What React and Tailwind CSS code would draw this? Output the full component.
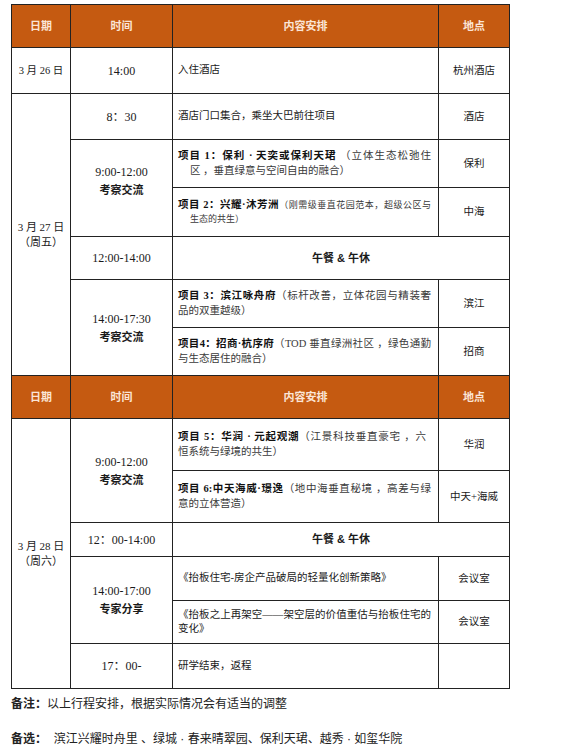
import React from 'react';

const serif = 'font-["Liberation_Serif","Noto_Sans_CJK_SC",serif]';
const sans = 'font-["Liberation_Sans","Noto_Sans_CJK_SC",sans-serif]';

function Header() {
    return (
        <tr className="h-[43px] bg-[#c55a11] text-[#fbe5d6] text-[11px] font-bold">
            <td className="border border-[#222] text-center">日期</td>
            <td className="border border-[#222] text-center">时间</td>
            <td className="border border-[#222] text-center">内容安排</td>
            <td className="border border-[#222] text-center">地点</td>
        </tr>
    );
}

// first line stretched edge to edge, like justified Word text
function Project({title, desc, rest, hang}) {
    return (
        <div className={hang ? 'pl-[12px]' : ''}>
            <span className={`block [text-align-last:justify] ${hang ? '-ml-[12px]' : ''}`}>
                <b className="text-[#111]">{title}</b>
                <span className="text-[#3a3a3a]">{desc}</span>
            </span>
            <span className="block text-[#3a3a3a]">{rest}</span>
        </div>
    );
}

function TimeBlock({time, label, up}) {
    return (
        <div className={`flex flex-col items-center ${up ? '-mt-[14px]' : ''}`}>
            <span className={`${serif} text-[12px]`}>{time}</span>
            <span className={`${sans} font-bold text-[11px] mt-[1px]`}>{label}</span>
        </div>
    );
}

const cell = 'border border-[#222]';
const content = 'border border-[#222] pl-[5px] pr-[7px] text-[10.5px] leading-[14.5px]';
const place = 'border border-[#222] text-center text-[10.5px]';
const time = 'border border-[#222] text-center text-[12px]';

export default function App() {
    return (
        <div className={`${sans} bg-white w-[582px] h-[753px] text-[#1a1a1a]`}>
            <div className="pt-[4px] pl-[11px]">
                <table className={`${serif} table-fixed border-collapse w-[498px]`}>
                    <colgroup>
                        <col className="w-[59px]"/>
                        <col className="w-[102px]"/>
                        <col className="w-[266px]"/>
                        <col className="w-[71px]"/>
                    </colgroup>
                    <tbody>
                    <Header/>
                    <tr className="h-[46px]">
                        <td className={`${cell} text-center text-[10.5px]`}>3 月 26 日</td>
                        <td className={time}>14:00</td>
                        <td className={content}>入住酒店</td>
                        <td className={place}>杭州酒店</td>
                    </tr>
                    <tr className="h-[46px]">
                        <td rowSpan={6} className={`${cell} text-center text-[11px] leading-[15px]`}>
                            <div>3 月 27 日</div>
                            <div>（周五）</div>
                        </td>
                        <td className={time}>8：30</td>
                        <td className={content}>酒店门口集合，乘坐大巴前往项目</td>
                        <td className={place}>酒店</td>
                    </tr>
                    <tr className="h-[48px]">
                        <td rowSpan={2} className={cell}>
                            <TimeBlock up time="9:00-12:00" label="考察交流"/>
                        </td>
                        <td className={content}>
                            <Project hang title="项目 1：保利 · 天奕或保利天珺" desc=" （立体生态松弛住"
                                     rest="区 ，垂直绿意与空间自由的融合）"/>
                        </td>
                        <td className={place}>保利</td>
                    </tr>
                    <tr className="h-[49px]">
                        <td className={content}>
                            <div className="pl-[12px]">
                                <span className="block -ml-[12px] [text-align-last:justify]">
                                    <b className="text-[#111]">项目 2：兴耀·沐芳洲</b>
                                    <span className="text-[9px] text-[#3a3a3a]">（刚需级垂直花园范本，超级公区与</span>
                                </span>
                                <span className="block text-[9px] text-[#3a3a3a]">生态的共生）</span>
                            </div>
                        </td>
                        <td className={place}>中海</td>
                    </tr>
                    <tr className="h-[43px]">
                        <td className={time}>12:00-14:00</td>
                        <td colSpan={2} className={`${cell} ${sans} text-center font-bold text-[11px]`}>午餐 &amp; 午休</td>
                    </tr>
                    <tr className="h-[48px]">
                        <td rowSpan={2} className={cell}>
                            <TimeBlock time="14:00-17:30" label="考察交流"/>
                        </td>
                        <td className={content}>
                            <Project title="项目 3：滨江咏舟府" desc="（标杆改善，立体花园与精装奢"
                                     rest="品的双重越级）"/>
                        </td>
                        <td className={place}>滨江</td>
                    </tr>
                    <tr className="h-[48px]">
                        <td className={content}>
                            <Project title="项目4：招商·杭序府" desc="（TOD 垂直绿洲社区 ，绿色通勤"
                                     rest="与生态居住的融合）"/>
                        </td>
                        <td className={place}>招商</td>
                    </tr>
                    <Header/>
                    <tr className="h-[52px]">
                        <td rowSpan={6} className={`${cell} text-center text-[11px] leading-[15px]`}>
                            <div>3 月 28 日</div>
                            <div>（周六）</div>
                        </td>
                        <td rowSpan={2} className={cell}>
                            <TimeBlock time="9:00-12:00" label="考察交流"/>
                        </td>
                        <td className={content}>
                            <div className="pr-[5px]">
                                <Project title="项目 5：华润 · 元起观潮" desc="（江景科技垂直豪宅 ，六"
                                         rest="恒系统与绿境的共生）"/>
                            </div>
                        </td>
                        <td className={place}>华润</td>
                    </tr>
                    <tr className="h-[52px]">
                        <td className={content}>
                            <Project title="项目 6:中天海威·璟逸" desc="（地中海垂直秘境 ，高差与绿"
                                     rest="意的立体营造）"/>
                        </td>
                        <td className={place}>中天+海威</td>
                    </tr>
                    <tr className="h-[34px]">
                        <td className={time}>12：00-14:00</td>
                        <td colSpan={2} className={`${cell} ${sans} text-center font-bold text-[11px]`}>午餐 &amp; 午休</td>
                    </tr>
                    <tr className="h-[44px]">
                        <td rowSpan={2} className={cell}>
                            <TimeBlock time="14:00-17:00" label="专家分享"/>
                        </td>
                        <td className={content}>《抬板住宅-房企产品破局的轻量化创新策略》</td>
                        <td className={place}>会议室</td>
                    </tr>
                    <tr className="h-[43px]">
                        <td className={content}>
                            <span className="block [text-align-last:justify]">《抬板之上再架空——架空层的价值重估与抬板住宅的</span>
                            <span className="block">变化》</span>
                        </td>
                        <td className={place}>会议室</td>
                    </tr>
                    <tr className="h-[45px]">
                        <td className={time}>17：00-</td>
                        <td className={content}>研学结束，返程</td>
                        <td className={place}></td>
                    </tr>
                    </tbody>
                </table>
                <p className="mt-[6px] text-[12px] leading-[18px] text-[#222]">
                    <b>备注：</b>以上行程安排，根据实际情况会有适当的调整
                </p>
                <p className="mt-[17px] text-[12px] leading-[18px] text-[#222]">
                    <b>备选：</b>&nbsp; 滨江兴耀时舟里 、绿城 · 春来晴翠园、保利天珺、越秀 · 如玺华院
                </p>
            </div>
        </div>
    );
}
